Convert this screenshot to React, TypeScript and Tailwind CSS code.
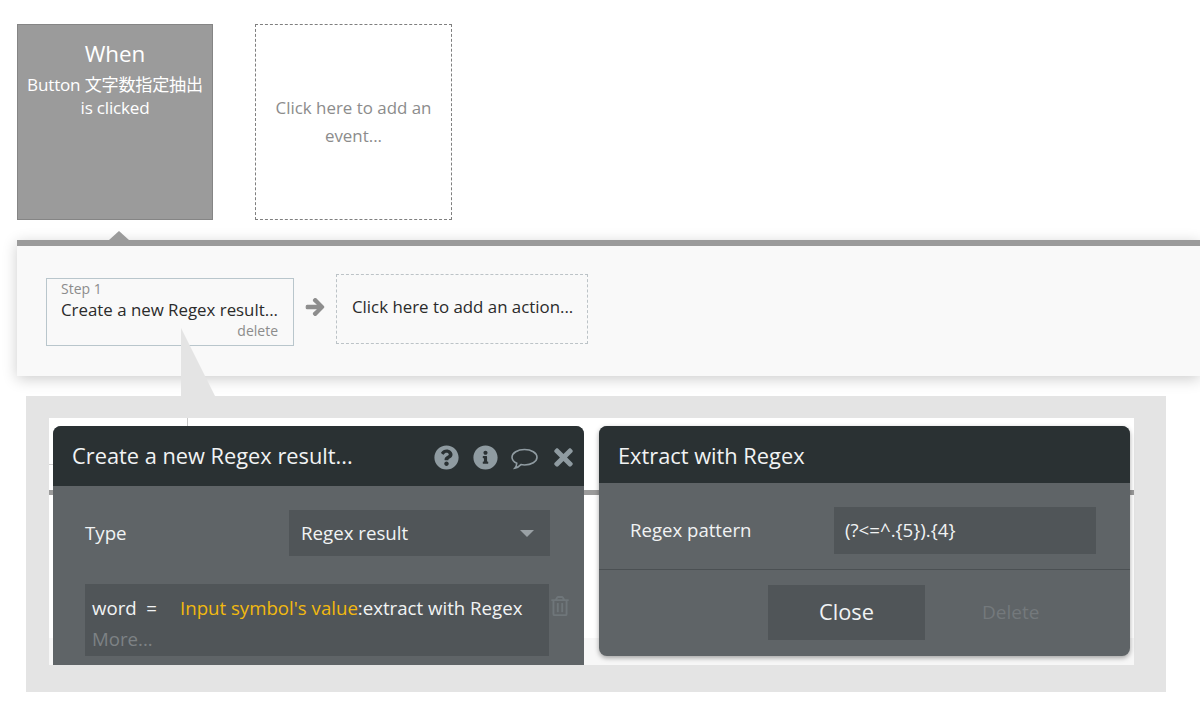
import {FaArrowRight, FaInfoCircle, FaQuestionCircle, FaRegTrashAlt, FaTimes} from "react-icons/fa";

const font = "font-['Open_Sans','Noto_Sans_CJK_JP',sans-serif]";

function CommentIcon() {
    return (
        <svg width="29" height="24" viewBox="0 0 28 24" fill="none" stroke="#8f9ba1" strokeWidth="1.6">
            <path d="M14 2.500c6.800 0 12.500 3.400 12.500 7.800S20.800 18 14 18c-1.300 0-2.500-.1-3.600-.4-1.600 1.700-3.800 3.300-6.100 3.600 1.100-1.300 1.900-2.900 2-4.900C3.400 15 1.500 12.800 1.500 10.300 1.500 5.900 7.200 2.500 14 2.500z" />
        </svg>
    );
}

function ActionEditor() {
    return (
        <div className="w-[531px] h-[239px] shrink-0 overflow-hidden rounded-t-lg bg-[#5f6467] text-[#f1f3f4]">
            {/* Header */}
            <div className="h-[60px] bg-[#2a3133] flex items-center pl-[19px] pr-[7px]">
                <span className="text-[21.8px] flex-1">Create a new Regex result...</span>
                <div className="flex items-center text-[#8f9ba1] pt-[3px]">
                    <FaQuestionCircle size={25} />
                    <span className="ml-[14px]"><FaInfoCircle size={25} /></span>
                    <span className="ml-[12px] mt-[3px]"><CommentIcon /></span>
                    <span className="ml-[11px]"><FaTimes size={27} /></span>
                </div>
            </div>
            {/* Type row */}
            <div className="flex items-center mt-[24px] pl-[32px]">
                <span className="text-[18.7px] w-[204px]">Type</span>
                <div className="w-[261px] h-[46px] bg-[#505558] flex items-center justify-between pl-[12px] pr-[16px]">
                    <span className="text-[18.7px]">Regex result</span>
                    <span className="w-0 h-0 border-x-[7px] border-x-transparent border-t-[7px] border-t-[#9aa1a5]"></span>
                </div>
            </div>
            {/* Field */}
            <div className="flex items-start mt-[28px] pl-[32px]">
                <div className="w-[464px] h-[72px] bg-[#505558] pl-[7px] pt-[10px] text-[18.65px] leading-[28px]">
                    <div className="flex whitespace-nowrap">
                        <span className="w-[88px]">word&nbsp; =</span>
                        <span className="text-[#f2b90f]">Input symbol's value</span>
                        <span>:extract with Regex</span>
                    </div>
                    <div className="text-[#7d8285] mt-[3px]">More...</div>
                </div>
                <span className="ml-[1px] mt-[12px] text-[#6f767a]"><FaRegTrashAlt size={20} /></span>
            </div>
        </div>
    );
}

function RegexEditor() {
    return (
        <div className="w-[531px] h-[230px] shrink-0 overflow-hidden rounded-lg bg-[#5f6467] text-[#f1f3f4] shadow-[0_2px_5px_rgba(0,0,0,0.35)]">
            <div className="h-[57px] bg-[#2a3133] flex items-center pl-[19px] pt-[3px]">
                <span className="text-[21.8px]">Extract with Regex</span>
            </div>
            <div className="h-[87px] flex items-start pt-[24px] pl-[31px] border-b border-[#4b5053]">
                <span className="text-[18.6px] w-[204px] leading-[45px]">Regex pattern</span>
                <div className="w-[262px] h-[47px] bg-[#505558] flex items-center pl-[11px] text-[18.7px]">(?&lt;=^.{"{"}5{"}"}).{"{"}4{"}"}</div>
            </div>
            <div className="flex items-start pt-[15px] pl-[169px]">
                <div className="w-[157px] h-[55px] bg-[#505558] flex items-center justify-center text-[21.8px]">Close</div>
                <span className="ml-[57px] mt-[13px] text-[19px] text-[#74797c]">Delete</span>
            </div>
        </div>
    );
}

export default function App() {
    return (
        <div className={`relative w-[1200px] h-[716px] overflow-hidden bg-white ${font}`}>
            {/* Events */}
            <div className="flex gap-[42px] pt-[24px] pl-[17px]">
                <div className="w-[196px] h-[196px] bg-[#9b9b9b] border border-[#858585] text-center text-white pt-[14px]">
                    <div className="text-[22.4px] leading-[30px]">When</div>
                    <div className="text-[17.1px] leading-[23px] mt-[4px] tracking-[-0.2px] whitespace-nowrap">Button 文字数指定抽出<br />is clicked</div>
                </div>
                <div className="w-[197px] h-[196px] border border-dashed border-[#7f7f7f] flex items-center justify-center text-center text-[16.9px] leading-[28px] text-[#8c8c8c]">
                    <span>Click here to add an<br />event...</span>
                </div>
            </div>

            {/* Workflow panel */}
            <div className="relative ml-[17px] mt-[20px] h-[136px] bg-[#f9f9f9] border-t-[6px] border-[#9b9b9b] shadow-[0_3px_14px_rgba(0,0,0,0.2)] flex items-start pl-[29px] pt-[28px]">
                <span className="absolute left-[92px] -top-[15px] w-0 h-0 border-x-[10px] border-x-transparent border-b-[9px] border-b-[#9b9b9b]"></span>
                <div className="w-[248px] h-[68px] mt-[4px] border border-[#b9c6cc] pl-[14px] pr-[15px] pt-[1px]">
                    <div className="text-[14px] leading-[18px] text-[#8c8c8c]">Step 1</div>
                    <div className="text-[16.85px] leading-[24px] text-[#2b2b2b] whitespace-nowrap">Create a new Regex result...</div>
                    <div className="text-[14px] leading-[18px] text-[#8c8c8c] text-right">delete</div>
                </div>
                <span className="ml-[11px] mt-[23px] text-[#8e8e8e]"><FaArrowRight size={20} stroke="currentColor" strokeWidth={30} /></span>
                <div className="ml-[11px] w-[252px] h-[70px] border border-dashed border-[#bcc3c7] flex items-center pl-[15px] text-[16.85px] text-[#2b2b2b] pb-[4px] whitespace-nowrap">Click here to add an action...</div>
            </div>

            {/* Callout pointing at step 1 */}
            <svg className="absolute left-[181px] top-[328px]" width="36" height="70" viewBox="0 0 36 70">
                <polygon points="0,0 35,70 0,70" fill="#e4e4e4" />
            </svg>

            {/* Property editors over the captured page */}
            <div className="ml-[26px] mt-[20px] w-[1140px] h-[296px] bg-[#e4e4e4] pt-[22px] pl-[23px]">
                <div className="relative w-[1085px] h-[247px] bg-white flex items-start gap-[15px] pt-[8px] pl-[4px]">
                    <span className="absolute left-0 right-0 top-[72px] h-[5px] bg-[#9b9b9b]"></span>
                    <span className="absolute left-0 w-[4px] top-[46px] h-px bg-[#d0d0d0]"></span>
                    <span className="absolute left-[138px] top-0 w-px h-[8px] bg-[#c8c8c8]"></span>
                    <span className="absolute left-0 right-0 bottom-0 h-[27px] bg-[#f7f7f7]"></span>
                    <div className="relative"><ActionEditor /></div>
                    <div className="relative"><RegexEditor /></div>
                </div>
            </div>
        </div>
    );
}
